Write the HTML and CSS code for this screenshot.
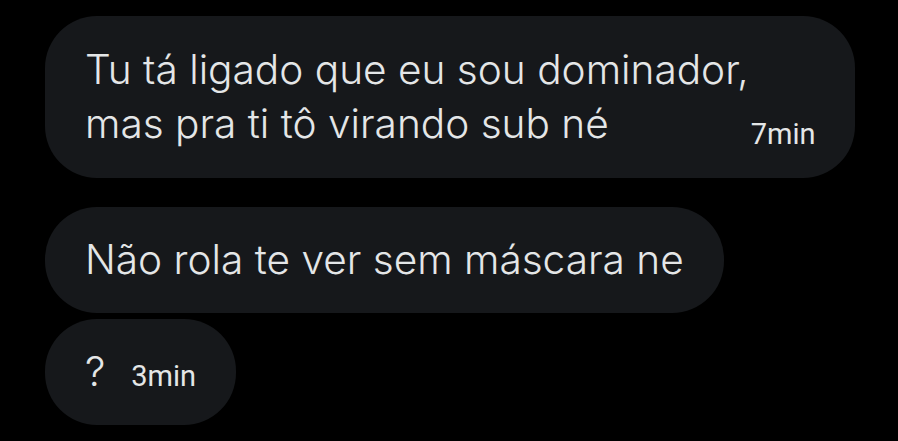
FILE: index.html
```html
<!DOCTYPE html>
<html lang="pt-BR">
<head>
  <meta charset="UTF-8" />
  <meta name="viewport" content="width=device-width, initial-scale=1.0" />
  <title>Mensagens</title>
  <link rel="stylesheet" href="styles.css">
</head>
<body>
  <div class="thread">
    <div class="bubble bubble-long">
      <p class="text">Tu tá ligado que eu sou dominador,<br>mas pra ti tô virando sub né</p>
      <span class="time">7min</span>
    </div>

    <div class="group">
      <div class="bubble">
        <p class="text">Não rola te ver sem máscara ne</p>
      </div>
      <div class="bubble">
        <p class="text">?</p>
        <span class="time">3min</span>
      </div>
    </div>
  </div>
</body>
</html>
```

FILE: styles.css
```css
body {
  margin: 0;
  background: #000;
  color: #e4e6e7;
  font-family: Inter, 'Noto Sans', sans-serif;
}
.thread {
  display: flex;
  flex-direction: column;
  align-items: flex-start;
  gap: 29px;
  padding: 16px 45px;
}
.group {
  display: flex;
  flex-direction: column;
  align-items: flex-start;
  gap: 6px;
}
.bubble {
  display: flex;
  align-items: baseline;
  gap: 26px;
  background: #16181b;
  border-radius: 52px;
  padding: 26px 40px;
}
/* multi-line message: time sits at the bottom edge */
.bubble-long {
  align-items: flex-end;
  gap: 2px;
  padding: 27px 40px;
}
.text {
  margin: 0;
  flex-shrink: 0;
  white-space: nowrap;
  font-size: 40.6px;
  font-weight: 350;
  line-height: 54px;
}
.time {
  flex-shrink: 0;
  font-family: Roboto, sans-serif;
  font-size: 29px;
  line-height: 34px;
}
```
